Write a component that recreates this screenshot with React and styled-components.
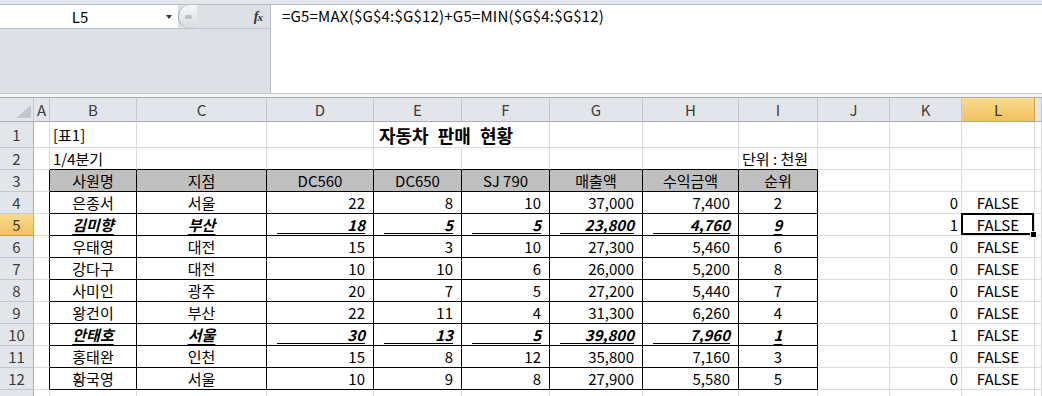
import React from 'react';
import styled, { createGlobalStyle, css } from 'styled-components';

const GlobalStyle = createGlobalStyle`
  body {
    margin: 0;
    background: #fff;
    font-family: "Noto Sans CJK KR", "Noto Sans", sans-serif;
  }
`;

// column widths incl. right grid line: header, A..L, then the rest
const COLS = [34, 16, 87, 130, 107, 88, 88, 93, 96, 79, 72, 72, 73];
const LETTERS = ['A', 'B', 'C', 'D', 'E', 'F', 'G', 'H', 'I', 'J', 'K', 'L', 'M'];
const GRID = '#dadcdd';

const Page = styled.div`
  width: 1042px;
  height: 396px;
  overflow: hidden;
  background: #fff;
`;

const TopStrip = styled.div`
  height: 4px;
  background: #e3e6ea;
  border-bottom: 1px solid #b8bdc3;
`;

const FormulaRow = styled.div`
  display: flex;
  height: 88px;
  border-bottom: 1px solid #c3c8ce;
`;

const LeftPane = styled.div`
  width: 270px;
  border-right: 1px solid #b8bdc3;
  background: #dde1e6;
`;

const NameRow = styled.div`
  display: flex;
  height: 23px;
  border-bottom: 1px solid #c0c5cb;
`;

const NameBox = styled.div`
  width: 178px;
  display: flex;
  align-items: center;
  background: #fff;
`;

const NameText = styled.span`
  width: 160px;
  text-align: center;
  font-size: 15px;
  line-height: 22px;
  color: #000;
`;

const DropArrow = styled.span`
  width: 0;
  height: 0;
  margin-left: 6px;
  border-left: 3.5px solid transparent;
  border-right: 3.5px solid transparent;
  border-top: 4px solid #333;
`;

const Controls = styled.div`
  flex: 1;
  display: flex;
  align-items: center;
  justify-content: space-between;
  padding-right: 8px;
`;

const Pill = styled.div`
  box-sizing: border-box;
  width: 19px;
  height: 23px;
  display: flex;
  align-items: center;
  justify-content: center;
  border-radius: 12px 0 0 12px;
  border-left: 1px solid #a3a9b0;
  background: linear-gradient(#f5f6f8, #d7dbe0);
`;

const Minus = styled.span`
  width: 7px;
  height: 4px;
  border-radius: 2px;
  background: #b9bec4;
`;

const Fx = styled.span`
  font-family: "Liberation Serif", serif;
  font-style: italic;
  font-weight: bold;
  font-size: 14px;
  color: #333;
  letter-spacing: -1px;
  small { font-size: 11px; }
`;

const FormulaInput = styled.div`
  flex: 1;
  background: #fff;
  padding-left: 11px;
  font-size: 15px;
  letter-spacing: 0.2px;
  line-height: 22px;
  color: #000;
  white-space: nowrap;
`;

const Splitter = styled.div`
  height: 3px;
  background: #f3f4f6;
  border-bottom: 1px solid #a9aeb4;
`;

const Sheet = styled.div`
  display: grid;
  grid-template-columns: ${COLS.map((w) => w + 'px').join(' ')} 1fr;
  grid-template-rows: 24px 26px repeat(12, 22px);
  font-size: 15px;
`;

const headBg = css`
  background: ${(p) => (p.$sel ? 'linear-gradient(#f9dc8e, #f1c15f)' : '#e2e5e9')};
  color: ${(p) => (p.$sel ? '#3a3a3a' : '#3c3c3c')};
`;

const ColHead = styled.div`
  box-sizing: border-box;
  display: flex;
  align-items: center;
  justify-content: center;
  border-right: 1px solid ${(p) => (p.$sel ? '#c9a350' : '#c4c8ce')};
  border-bottom: 1px solid #a9afb6;
  line-height: 20px;
  ${headBg}
`;

const Corner = styled.div`
  box-sizing: border-box;
  display: flex;
  align-items: flex-end;
  justify-content: flex-end;
  padding: 0 2px 3px 0;
  background: #e2e5e9;
  border-right: 1px solid #c4c8ce;
  border-bottom: 1px solid #a9afb6;
`;

const Triangle = styled.span`
  width: 0;
  height: 0;
  border-left: 15px solid transparent;
  border-bottom: 13px solid #c2c6cc;
`;

const RowHead = styled.div`
  box-sizing: border-box;
  display: flex;
  align-items: center;
  justify-content: center;
  border-right: 1px solid #a9afb6;
  border-bottom: 1px solid ${(p) => (p.$sel ? '#c9a350' : '#c4c8ce')};
  line-height: 20px;
  ${headBg}
`;

const Cell = styled.div`
  box-sizing: border-box;
  position: relative;
  display: flex;
  align-items: center;
  justify-content: ${(p) => ({ left: 'flex-start', center: 'center', right: 'flex-end' }[p.$align || 'left'])};
  padding: 0 ${(p) => (p.$pr != null ? p.$pr : 3)}px 0 3px;
  grid-column: ${(p) => (p.$span ? `span ${p.$span}` : 'auto')};
  border-right: 1px solid ${(p) => (p.$rb ? '#000' : GRID)};
  border-bottom: 1px solid ${(p) => (p.$bb ? '#000' : GRID)};
  background: ${(p) => (p.$head ? '#bfbfbf' : '#fff')};
  color: #000;
  line-height: 20px;
  white-space: nowrap;
  ${(p) => p.$em && css`
    font-weight: bold;
    font-style: italic;
  `}
  ${(p) => p.$active && css`
    &::after {
      content: '';
      position: absolute;
      left: -1px;
      top: -1px;
      right: 0;
      bottom: 0;
      border: 2px solid #000;
    }
    &::before {
      content: '';
      position: absolute;
      right: -3px;
      bottom: -3px;
      width: 5px;
      height: 5px;
      background: #000;
      border: 1px solid #fff;
      z-index: 2;
    }
  `}
`;

const Title = styled.span`
  font-size: 18px;
  font-weight: bold;
  word-spacing: 5px;
  line-height: 24px;
  padding-left: 2px;
`;

const UText = styled.span`
  text-decoration: underline;
  text-underline-offset: 3px;
  text-decoration-thickness: 1px;
`;

const NumLine = styled.span`
  flex: 1;
  margin-left: 7px;
  text-align: right;
  line-height: 17px;
  border-bottom: 1px solid #000;
`;

const DATA = [
  ['은종서', '서울', '22', '8', '10', '37,000', '7,400', '2', '0'],
  ['김미향', '부산', '18', '5', '5', '23,800', '4,760', '9', '1'],
  ['우태영', '대전', '15', '3', '10', '27,300', '5,460', '6', '0'],
  ['강다구', '대전', '10', '10', '6', '26,000', '5,200', '8', '0'],
  ['사미인', '광주', '20', '7', '5', '27,200', '5,440', '7', '0'],
  ['왕건이', '부산', '22', '11', '4', '31,300', '6,260', '4', '0'],
  ['안태호', '서울', '30', '13', '5', '39,800', '7,960', '1', '1'],
  ['홍태완', '인천', '15', '8', '12', '35,800', '7,160', '3', '0'],
  ['황국영', '서울', '10', '9', '8', '27,900', '5,580', '5', '0'],
];
const EMPH = [1, 6];
const HEADS = ['사원명', '지점', 'DC560', 'DC650', 'SJ 790', '매출액', '수익금액', '순위'];

const blanks = (n, key, props = {}) =>
  Array.from({ length: n }, (_, i) => <Cell key={key + i} {...props} />);

const App = () => {
  const cells = [];

  // column headers
  cells.push(<Corner key="corner"><Triangle /></Corner>);
  LETTERS.forEach((l) => {
    cells.push(<ColHead key={'h' + l} $sel={l === 'L'}>{l === 'M' ? '' : l}</ColHead>);
  });

  // row 1
  cells.push(<RowHead key="r1">1</RowHead>);
  cells.push(<Cell key="1a" />);
  cells.push(<Cell key="1b">[표1]</Cell>);
  cells.push(<Cell key="1c" />);
  cells.push(<Cell key="1d" />);
  cells.push(<Cell key="1ef" $span={2}><Title>자동차 판매 현황</Title></Cell>);
  cells.push(...blanks(7, '1x'));

  // row 2
  cells.push(<RowHead key="r2">2</RowHead>);
  cells.push(<Cell key="2a" />);
  cells.push(<Cell key="2b" $bb>1/4분기</Cell>);
  cells.push(...blanks(6, '2m', { $bb: true }));
  cells.push(<Cell key="2i" $bb>단위 : 천원</Cell>);
  cells.push(...blanks(4, '2x'));

  // row 3 table head
  cells.push(<RowHead key="r3">3</RowHead>);
  cells.push(<Cell key="3a" $rb />);
  HEADS.forEach((h) => {
    cells.push(<Cell key={'3' + h} $head $rb $bb $align="center">{h}</Cell>);
  });
  cells.push(...blanks(4, '3x'));

  // rows 4..12
  DATA.forEach((row, i) => {
    const n = i + 4;
    const em = EMPH.includes(i);
    const [name, city, d, e, f, g, h, rank, k] = row;
    cells.push(<RowHead key={'r' + n} $sel={n === 5}>{n}</RowHead>);
    cells.push(<Cell key={n + 'a'} $rb />);
    [name, city].forEach((t, j) => {
      cells.push(
        <Cell key={n + 't' + j} $rb $bb $align="center" $em={em}>
          {em ? <UText>{t}</UText> : t}
        </Cell>
      );
    });
    [d, e, f, g, h].forEach((v, j) => {
      cells.push(
        <Cell key={n + 'n' + j} $rb $bb $align="right" $pr={8} $em={em}>
          {em ? <NumLine>{v}</NumLine> : v}
        </Cell>
      );
    });
    cells.push(
      <Cell key={n + 'i'} $rb $bb $align="center" $em={em}>
        {em ? <UText>{rank}</UText> : rank}
      </Cell>
    );
    cells.push(<Cell key={n + 'j'} />);
    cells.push(<Cell key={n + 'k'} $align="right" $pr={3}>{k}</Cell>);
    cells.push(<Cell key={n + 'l'} $align="center" $active={n === 5}>FALSE</Cell>);
    cells.push(<Cell key={n + 'm'} />);
  });

  // row 13, only its top edge shows
  cells.push(<RowHead key="r13" />);
  cells.push(...blanks(13, '13x'));

  return (
    <Page>
      <GlobalStyle />
      <TopStrip />
      <FormulaRow>
        <LeftPane>
          <NameRow>
            <NameBox>
              <NameText>L5</NameText>
              <DropArrow />
            </NameBox>
            <Controls>
              <Pill><Minus /></Pill>
              <Fx>f<small>x</small></Fx>
            </Controls>
          </NameRow>
        </LeftPane>
        <FormulaInput>=G5=MAX($G$4:$G$12)+G5=MIN($G$4:$G$12)</FormulaInput>
      </FormulaRow>
      <Splitter />
      <Sheet>{cells}</Sheet>
    </Page>
  );
};

export default App;
